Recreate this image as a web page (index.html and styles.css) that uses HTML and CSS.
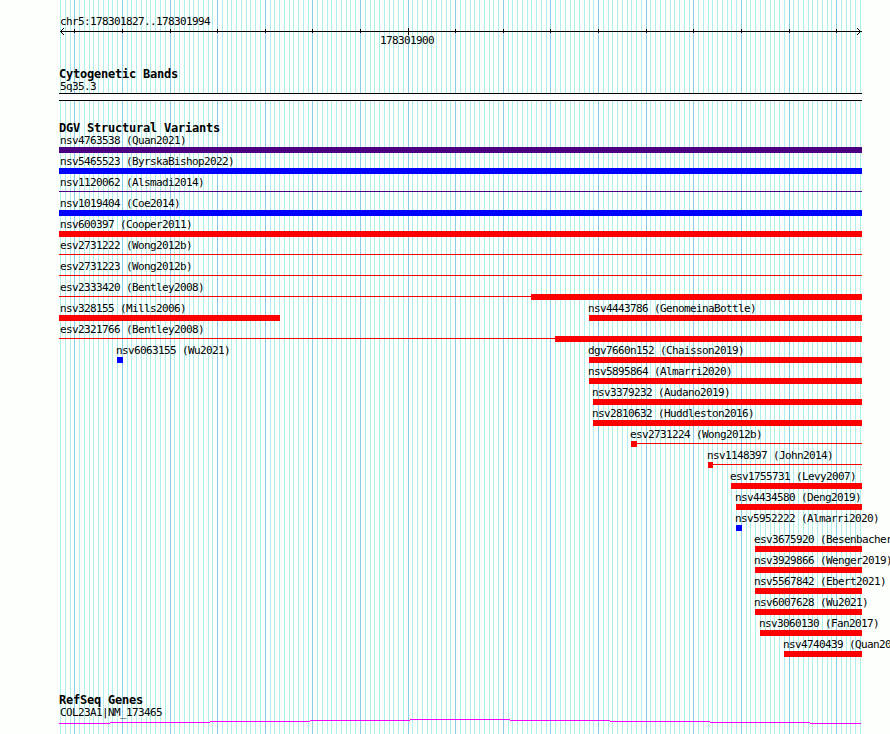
FILE: index.html
```
<!DOCTYPE html>
<html lang="en">
<head>
    <meta charset="UTF-8">
    <title>chr5:178301827..178301994</title>
    <link rel="stylesheet" href="styles.css">
</head>
<body>

    <svg class="grid" width="890" height="734" shape-rendering="crispEdges">
        <path id="minor" class="minor"/>
        <path id="major" class="major"/>
    </svg>

    <main class="panel">
        <!-- RULER -->
        <header class="ruler">
            <div class="label">chr5:178301827..178301994</div>
            <svg class="axis" width="803" height="7" shape-rendering="crispEdges">
                <path id="ticks" d="M1 3h802v1h-802z"/>
                <path d="M2 2h1v1h-1zM3 1h1v1h-1zM4 0h1v1h-1zM2 4h1v1h-1zM3 5h1v1h-1zM4 6h1v1h-1z"/>
                <path d="M800 2h1v1h-1zM799 1h1v1h-1zM798 0h1v1h-1zM800 4h1v1h-1zM799 5h1v1h-1zM798 6h1v1h-1z"/>
            </svg>
            <div class="label position">178301900</div>
        </header>

        <section class="track cytoband">
            <h2>Cytogenetic Bands</h2>
            <div class="label">5q35.3</div>
            <div class="band"></div>
        </section>

        <section class="track">
            <h2>DGV Structural Variants</h2>
            <div id="variants"></div>
        </section>

        <section class="track genes">
            <h2>RefSeq Genes</h2>
            <div class="label">COL23A1|NM_173465</div>
            <svg class="intron" width="803" height="5" shape-rendering="crispEdges">
                <path d="M0 4h51v1h-51zM51 3h100v1h-100zM151 2h100v1h-100zM251 1h100v1h-100zM351 0h100v1h-100zM451 1h100v1h-100zM551 2h100v1h-100zM651 3h100v1h-100zM751 4h51v1h-51z"/>
            </svg>
        </section>
    </main>

    <script src="browser.js"></script>
</body>
</html>
```

FILE: styles.css
```
body {
    margin: 0;
    height: 734px;
    overflow: hidden;
    position: relative;
    background-color: #fdfffc;
    color: #000;
    font-family: "DejaVu Sans Mono", monospace;
}
.grid {
    position: absolute;
    top: 0;
    left: 0;
}
.minor {
    fill: #afeeee;
}
.major {
    fill: #87ceeb;
}
.panel {
    position: relative;
    width: 803px;
    margin-left: 59px;
    padding-top: 15px;
}
svg {
    display: block;
}
h2 {
    margin: 0;
    height: 13px;
    font-size: 12px;
    line-height: 15px;
    letter-spacing: -0.224px;
    white-space: nowrap;
}
.label {
    height: 13px;
    padding-left: 1px;
    font-size: 11px;
    line-height: 13px;
    letter-spacing: -0.622px;
    white-space: nowrap;
}
.ruler {
    height: 52px;
}
.position {
    margin-top: -1px;
    padding-left: 321px;
}
.cytoband {
    height: 54px;
}
.band {
    height: 6px;
    border-top: 1px solid #000;
    border-bottom: 1px solid #000;
    background: #fff;
}
.row {
    display: flex;
    height: 21px;
}
.feature {
    flex: none;
}
.feature .label {
    width: 0;
    margin-left: -1px;
    padding-left: 0;
}
.feature.clipped .label {
    padding-left: 2px;
}
.glyph {
    display: flex;
    align-items: flex-start;
    height: 6px;
}
.bar {
    height: 6px;
    background: currentColor;
}
.line {
    height: 1px;
    margin-top: 2px;
    background: currentColor;
}
.red {
    color: #f00;
}
.blue {
    color: #00f;
}
.indigo {
    color: #4b0082;
}
.genes {
    margin-top: 34px;
}
.intron {
    fill: #f0f;
}
```

FILE: browser.js
```
const LEFT = 59;
const RIGHT = 862;

// One line per base, a darker one every ten
let minor = "";
let major = "";
let ticks = "";
for (let i = 0; i <= 168; i++) {
    const base = 178301827 + i;
    const x = Math.round(60 + i * 800 / 168);
    if (base % 10 === 0) {
        major += `M${x} 0h1v734h-1z`;
        ticks += base % 100 === 0 ? `M${x - LEFT} 0h1v7h-1z` : `M${x - LEFT} 1h1v4h-1z`;
    } else {
        minor += `M${x} 0h1v734h-1z`;
    }
}
document.getElementById("minor").setAttribute("d", minor);
document.getElementById("major").setAttribute("d", major);
const axis = document.getElementById("ticks");
axis.setAttribute("d", axis.getAttribute("d") + ticks);

// [name, color, parts], each part is [type, start, end]
const rows = [
    [["nsv4763538 (Quan2021)", "indigo", [["bar", LEFT, RIGHT]]]],
    [["nsv5465523 (ByrskaBishop2022)", "blue", [["bar", LEFT, RIGHT]]]],
    [["nsv1120062 (Alsmadi2014)", "indigo", [["line", LEFT, RIGHT]]]],
    [["nsv1019404 (Coe2014)", "blue", [["bar", LEFT, RIGHT]]]],
    [["nsv600397 (Cooper2011)", "red", [["bar", LEFT, RIGHT]]]],
    [["esv2731222 (Wong2012b)", "red", [["line", LEFT, RIGHT]]]],
    [["esv2731223 (Wong2012b)", "red", [["line", LEFT, RIGHT]]]],
    [["esv2333420 (Bentley2008)", "red", [["line", LEFT, 531], ["bar", 531, RIGHT]]]],
    [["nsv328155 (Mills2006)", "red", [["bar", LEFT, 280]]],
     ["nsv4443786 (GenomeinaBottle)", "red", [["bar", 589, RIGHT]]]],
    [["esv2321766 (Bentley2008)", "red", [["line", LEFT, 555], ["bar", 555, RIGHT]]]],
    [["nsv6063155 (Wu2021)", "blue", [["bar", 117, 123]]],
     ["dgv7660n152 (Chaisson2019)", "red", [["bar", 589, RIGHT]]]],
    [["nsv5895864 (Almarri2020)", "red", [["bar", 589, RIGHT]]]],
    [["nsv3379232 (Audano2019)", "red", [["bar", 593, RIGHT]]]],
    [["nsv2810632 (Huddleston2016)", "red", [["bar", 593, RIGHT]]]],
    [["esv2731224 (Wong2012b)", "red", [["bar", 631, 637], ["line", 637, RIGHT]]]],
    [["nsv1148397 (John2014)", "red", [["bar", 708, 713], ["line", 713, RIGHT]]]],
    [["esv1755731 (Levy2007)", "red", [["bar", 731, RIGHT]]]],
    [["nsv4434580 (Deng2019)", "red", [["bar", 736, RIGHT]]]],
    [["nsv5952222 (Almarri2020)", "blue", [["bar", 736, 742]]]],
    [["esv3675920 (Besenbacher2016)", "red", [["bar", 755, RIGHT]]]],
    [["nsv3929866 (Wenger2019)", "red", [["bar", 755, RIGHT]]]],
    [["nsv5567842 (Ebert2021)", "red", [["bar", 755, RIGHT]]]],
    [["nsv6007628 (Wu2021)", "red", [["bar", 755, RIGHT]]]],
    [["nsv3060130 (Fan2017)", "red", [["bar", 760, RIGHT]]]],
    [["nsv4740439 (Quan2021)", "red", [["bar", 784, RIGHT]]]]
];

let html = "";
rows.forEach(row => {
    let x = LEFT;
    html += '<div class="row">';
    row.forEach(([name, color, parts]) => {
        const start = parts[0][1];
        const clipped = start === LEFT ? " clipped" : "";
        html += `<div class="feature${clipped}" style="margin-left:${start - x}px">`;
        html += `<div class="label">${name}</div><div class="glyph ${color}">`;
        parts.forEach(([type, from, to]) => {
            html += `<div class="${type}" style="width:${to - from}px"></div>`;
            x = to;
        });
        html += "</div></div>";
    });
    html += "</div>";
});
document.getElementById("variants").innerHTML = html;
```
